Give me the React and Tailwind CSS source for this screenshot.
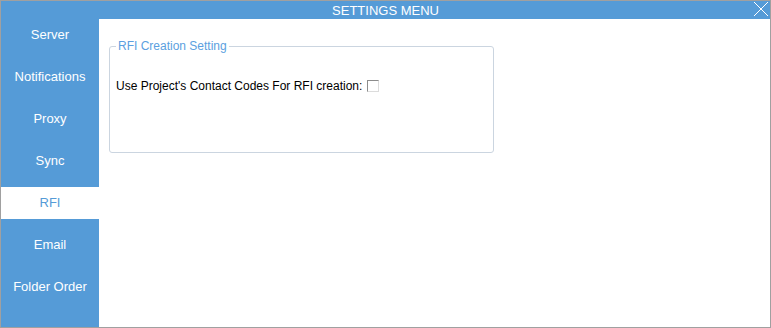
const menuItems = ['Server', 'Notifications', 'Proxy', 'Sync', 'RFI', 'Email', 'Folder Order'];

const App = () => {
  const active = 'RFI';

  return (
    <div
      className="w-[771px] h-[328px] border border-[#a0a0a0] bg-white flex flex-col overflow-hidden"
      style={{ fontFamily: '"Liberation Sans", Arial, sans-serif' }}
    >
      {/* title bar */}
      <div className="relative h-[18px] shrink-0 bg-[#559bd7] flex items-center justify-center text-white text-[13px] leading-none">
        <span>SETTINGS MENU</span>
        <svg
          className="absolute right-[1px] top-0"
          width="16"
          height="16"
          viewBox="0 0 16 16"
          shapeRendering="crispEdges"
        >
          <path d="M1 1L15 15M15 1L1 15" stroke="white" strokeWidth="1.2" />
        </svg>
      </div>

      <div className="flex flex-1 min-h-0">
        {/* sidebar */}
        <div className="w-[98px] shrink-0 bg-[#559bd7] flex flex-col gap-[10px]">
          {menuItems.map((item) => (
            <div
              key={item}
              className={`h-[32px] flex items-center justify-center text-[13px] ${
                item === active ? 'bg-white text-[#559bd7]' : 'text-white'
              }`}
            >
              {item}
            </div>
          ))}
        </div>

        {/* content */}
        <div className="flex-1 pl-[10px] pt-[21px]">
          <fieldset className="w-[385px] h-[113px] border border-[#cbd5e0] rounded-[3px] px-[6px] m-0">
            <legend className="text-[12px] text-[#5b9fe0] px-[2px] leading-none">
              RFI Creation Setting
            </legend>
            <div className="flex items-center mt-[25px] text-[12px] text-black">
              <span>Use Project's Contact Codes For RFI creation:</span>
              <span className="ml-[5px] w-[12px] h-[12px] border border-t-[#8c8c8c] border-l-[#8c8c8c] border-r-[#dcdcdc] border-b-[#dcdcdc] bg-white inline-block" />
            </div>
          </fieldset>
        </div>
      </div>
    </div>
  );
};

export default App;
